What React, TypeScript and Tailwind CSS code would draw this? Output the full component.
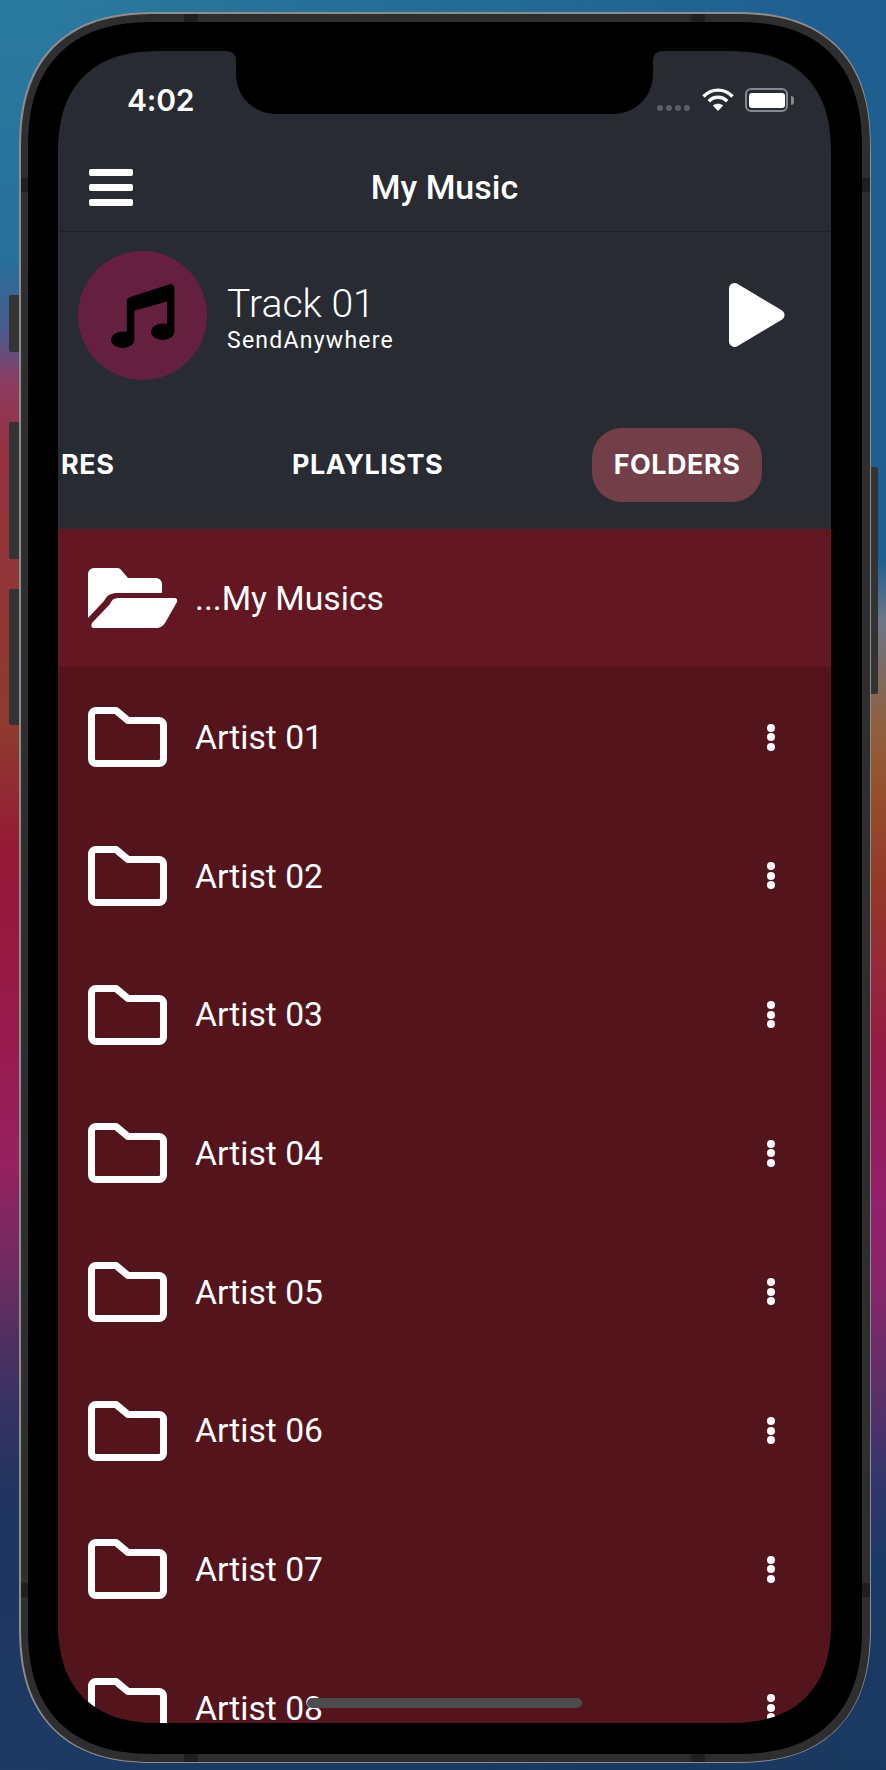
const artists = ["Artist 01", "Artist 02", "Artist 03", "Artist 04", "Artist 05", "Artist 06", "Artist 07", "Artist 08"]

function FolderIcon() {
	return (
		<svg width="79" height="60" viewBox="0 0 79 60" fill="none" stroke="#fff" strokeWidth="7" strokeLinejoin="round">
			<path d="M8 3.5H28L40 13.5H71A4.5 4.5 0 0 1 75.5 18V52A4.5 4.5 0 0 1 71 56.5H8A4.5 4.5 0 0 1 3.5 52V8A4.5 4.5 0 0 1 8 3.5Z" />
		</svg>
	)
}

function OpenFolderIcon() {
	return (
		<svg width="90" height="60" viewBox="0 0 90 60" fill="#fff">
			<path d="M6 0H29Q31 0 32.5 1.2L40 10H68A6 6 0 0 1 74 16V25H30C23 25 19 27 16 33L0 50V6A6 6 0 0 1 6 0Z" />
			<path d="M22 36Q24 30 30 30H86Q90 30 89 34L77 55Q74 60 68 60H6Q2 60 4 55Z" />
		</svg>
	)
}

function Dots() {
	return (
		<div className="flex flex-col gap-[1.5px]">
			<div className="h-2 w-2 rounded-full bg-white" />
			<div className="h-2 w-2 rounded-full bg-white" />
			<div className="h-2 w-2 rounded-full bg-white" />
		</div>
	)
}

function StatusBar() {
	return (
		<div className="flex h-[94px] items-start justify-between pt-[37px] pr-[36px] pl-[69px]">
			<div className="font-['Inter',sans-serif] text-[30px] leading-[24px] font-semibold tracking-[-0.2px] text-white">4:02</div>
			<div className="flex items-start">
				<div className="mt-[17px] flex gap-[3px]">
					<div className="h-[6px] w-[6px] rounded-full bg-[#5b5f64]" />
					<div className="h-[6px] w-[6px] rounded-full bg-[#5b5f64]" />
					<div className="h-[6px] w-[6px] rounded-full bg-[#5b5f64]" />
					<div className="h-[6px] w-[6px] rounded-full bg-[#5b5f64]" />
				</div>
				<svg className="mr-[11px] ml-[12px]" width="32" height="23" viewBox="0 0 32 23" fill="none" stroke="#fff" strokeWidth="3.4">
					<path d="M1.5 8.5C9.5 0 22.5 0 30.5 8.5" />
					<path d="M6.8 13.2C12 8 20 8 25.2 13.2" />
					<path d="M16 23L10.8 17.6C14 15 18 15 21.2 17.6Z" fill="#fff" stroke="none" />
				</svg>
				<div className="flex items-center">
					<div className="flex h-[24px] w-[43px] items-center justify-center rounded-[6px] border-[2px] border-[#85888c]">
						<div className="h-[15px] w-[36px] rounded-[3px] bg-white" />
					</div>
					<div className="mr-[1px] ml-[3px] h-[9px] w-[3px] rounded-r-full bg-[#85888c]" />
				</div>
			</div>
		</div>
	)
}

function TopBar() {
	return (
		<div className="grid h-[87px] grid-cols-[1fr_auto_1fr] items-start border-b border-[#1f2327] pt-[24px]">
			<div className="ml-[31px] flex w-[44px] flex-col gap-2">
				<div className="h-[7px] rounded-[2px] bg-white" />
				<div className="h-[7px] rounded-[2px] bg-white" />
				<div className="h-[7px] rounded-[2px] bg-white" />
			</div>
			<div className="mt-[-5px] font-['Roboto',sans-serif] text-[34px] leading-[46px] font-medium text-white">My Music</div>
			<div />
		</div>
	)
}

function NowPlaying() {
	return (
		<div className="flex h-[168px] items-start pt-[19px] pr-[46px] pl-[20px]">
			<div className="flex h-[129px] w-[129px] shrink-0 items-center justify-center rounded-full bg-[#652040]">
				<svg width="64" height="64" viewBox="0 0 64 64" fill="#000">
					<path d="M15.7 17.5A5 5 0 0 1 19 13L58 .4A4 4 0 0 1 63.4 4V48H56V17.5L23.3 26.7V56H15.7Z" />
					<ellipse cx="11.7" cy="55.8" rx="11.7" ry="8.2" />
					<ellipse cx="51.7" cy="47.8" rx="11.7" ry="8.2" />
				</svg>
			</div>
			<div className="ml-[20px] flex flex-1 flex-col pt-[30px] font-['Roboto',sans-serif] text-white">
				<div className="text-[39.2px] leading-[46px] font-light">Track 01</div>
				<div className="text-[23px] leading-[28px] tracking-[1.25px]">SendAnywhere</div>
			</div>
			<svg className="mt-[32px]" width="56" height="64" viewBox="0 0 56 64" fill="#fff" stroke="#fff" strokeWidth="11" strokeLinejoin="round">
				<path d="M5.5 5.5L50 32L5.5 58.5Z" />
			</svg>
		</div>
	)
}

function Tabs() {
	return (
		<div className="flex h-[129px] items-start overflow-hidden pt-[28px] pl-[3px] font-['Inter',sans-serif] text-[27px] leading-[74px] font-bold tracking-[0.5px] text-white">
			<div className="w-[231px]">RES</div>
			<div className="w-[300px]">PLAYLISTS</div>
			<div className="flex h-[74px] w-[170px] items-center justify-center rounded-[30px] bg-[#723e47]">FOLDERS</div>
		</div>
	)
}

function FolderList() {
	return (
		<div className="flex-1 overflow-hidden bg-[#53141c] font-['Roboto',sans-serif] text-[33.7px] text-white">
			<div className="flex h-[138px] items-center bg-[#621722] pl-[30px]">
				<OpenFolderIcon />
				<span className="ml-[17px] pt-[2px]">...My Musics</span>
			</div>
			<div className="mt-px">
				{artists.map((name) => (
					<div key={name} className="flex h-[138.67px] shrink-0 items-center pr-[56px] pl-[30px]">
						<FolderIcon />
						<span className="ml-[28px] flex-1 pt-[2px]">{name}</span>
						<Dots />
					</div>
				))}
			</div>
		</div>
	)
}

export default function App() {
	return (
		<div className="relative h-[1770px] w-[886px] overflow-hidden bg-[linear-gradient(180deg,#1f5f90_0px,#1f5f90_560px,#6d7588_620px,#8f6040_722px,#95502c_790px,#943828_885px,#941a46_1054px,#92206a_1200px,#8a2468_1280px,#5a3068_1393px,#33356a_1478px,#1a3a66_1562px,#1a3960_1770px)] pt-3 pl-[19px]">
			<div className="pointer-events-none absolute inset-0 bg-[linear-gradient(180deg,#2a7a9f_0px,#27709b_260px,#4a5a8e_330px,#8f3a60_385px,#94323f_450px,#8f3a2f_730px,#951a36_850px,#971a48_1000px,#962060_1167px,#6a2d60_1280px,#3a3262_1393px,#1e3560_1506px,#1c3a63_1770px)] [mask-image:linear-gradient(90deg,#000_0%,#000_5%,transparent_95%)]" />

			{/* side buttons */}
			<div className="absolute top-[295px] left-[9px] h-[57px] w-[10px] rounded-l-[2px] bg-[#333]" />
			<div className="absolute top-[422px] left-[9px] h-[137px] w-[10px] rounded-l-[2px] bg-[#333]" />
			<div className="absolute top-[589px] left-[9px] h-[136px] w-[10px] rounded-l-[2px] bg-[#333]" />
			<div className="absolute top-[467px] left-[871px] h-[227px] w-[7px] rounded-r-[2px] bg-[#333]" />

			<div className="relative h-[1751px] w-[852px] rounded-[138px] bg-[#8d8d8d] p-[1.5px] [corner-shape:superellipse(1.3)]">
				<div className="relative h-full w-full rounded-[136px] bg-[#2e2e2e] pt-[8.5px] pr-[7.5px] pb-[7.5px] pl-[7.5px] [corner-shape:superellipse(1.3)]">
					{/* antenna bands */}
					<div className="absolute top-0 left-[163.5px] h-[8.5px] w-[14px] bg-[#1f1f1f]" />
					<div className="absolute top-0 left-[670.5px] h-[8.5px] w-[14px] bg-[#1f1f1f]" />
					<div className="absolute bottom-0 left-[163.5px] h-[7.5px] w-[14px] bg-[#1f1f1f]" />
					<div className="absolute bottom-0 left-[670.5px] h-[7.5px] w-[14px] bg-[#1f1f1f]" />
					<div className="absolute top-[164.5px] left-0 h-[14px] w-[7.5px] bg-[#1f1f1f]" />
					<div className="absolute top-[164.5px] right-0 h-[14px] w-[7.5px] bg-[#1f1f1f]" />
					<div className="absolute bottom-[164.5px] left-0 h-[14px] w-[7.5px] bg-[#1f1f1f]" />
					<div className="absolute right-0 bottom-[164.5px] h-[14px] w-[7.5px] bg-[#1f1f1f]" />

					<div className="h-full w-full rounded-[128px] bg-black pt-[29px] pr-[31px] pb-[31px] pl-[30px] [corner-shape:superellipse(1.3)]">
						<div className="relative flex h-[1672px] w-[773px] flex-col overflow-hidden rounded-[104px] bg-[#282c32] [corner-shape:superellipse(1.3)]">
							<StatusBar />
							<TopBar />
							<NowPlaying />
							<Tabs />
							<FolderList />

							{/* notch */}
							<svg className="absolute top-0 left-[168px]" width="437" height="63" viewBox="0 0 437 63" fill="#000">
								<path d="M0 0Q10 0 10 10V23C10 46 28 63 50 63H387C409 63 427 46 427 23V10Q427 0 437 0Z" />
							</svg>
							{/* home indicator */}
							<div className="absolute top-[1647px] left-[249px] h-[10px] w-[275px] rounded-full bg-[#4c4c4c]" />
						</div>
					</div>
				</div>
			</div>
		</div>
	)
}
